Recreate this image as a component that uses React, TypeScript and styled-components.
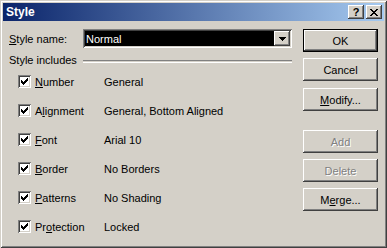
import React from "react";
import styled, { createGlobalStyle } from "styled-components";

const GlobalStyle = createGlobalStyle`
  html, body {
    margin: 0;
    padding: 0;
    background: #d4d0c8;
  }
  body {
    font-family: "Liberation Sans", Arial, sans-serif;
    font-size: 11px;
    color: #000;
  }
`;

const Window = styled.div`
  width: 387px;
  height: 248px;
  box-sizing: border-box;
  padding: 3px;
  background: #d4d0c8;
  box-shadow: inset 1px 1px #d4d0c8, inset -1px -1px #404040,
    inset 2px 2px #fff, inset -2px -2px #808080;
  display: flex;
  flex-direction: column;
`;

const TitleBar = styled.div`
  height: 18px;
  display: flex;
  align-items: center;
  padding: 0 2px 0 3px;
  background: linear-gradient(to right, #0a246a, #a6caf0);
`;

const Title = styled.span`
  flex: 1;
  color: #fff;
  font-weight: bold;
  font-size: 12px;
`;

const CaptionButton = styled.button`
  width: 16px;
  height: 14px;
  margin-left: 2px;
  padding: 0;
  border: none;
  background: #d4d0c8;
  box-shadow: inset -1px -1px #404040, inset 1px 1px #fff,
    inset -2px -2px #808080, inset 2px 2px #d4d0c8;
  display: flex;
  align-items: center;
  justify-content: center;
  font-family: "Liberation Sans", Arial, sans-serif;
  font-weight: bold;
  font-size: 11px;
  line-height: 1;
  color: #000;
`;

const Body = styled.div`
  flex: 1;
  display: flex;
  padding: 8px 6px 0 6px;
`;

const Main = styled.div`
  width: 283px;
  display: flex;
  flex-direction: column;
`;

const NameRow = styled.div`
  display: flex;
  align-items: center;
  height: 19px;
`;

const NameLabel = styled.span`
  width: 74px;
`;

const Combo = styled.div`
  width: 209px;
  height: 19px;
  box-sizing: border-box;
  padding: 2px;
  display: flex;
  background: #fff;
  box-shadow: inset 1px 1px #808080, inset -1px -1px #fff,
    inset 2px 2px #404040, inset -2px -2px #d4d0c8;
`;

const ComboField = styled.div`
  flex: 1;
  background: #000;
  color: #fff;
  display: flex;
  align-items: center;
  padding-left: 1px;
`;

const ComboArrow = styled.div`
  width: 16px;
  background: #d4d0c8;
  box-shadow: inset -1px -1px #404040, inset 1px 1px #fff,
    inset -2px -2px #808080, inset 2px 2px #d4d0c8;
  display: flex;
  align-items: center;
  justify-content: center;
`;

const GroupHeader = styled.div`
  display: flex;
  align-items: center;
  height: 15px;
  margin-top: 4px;
`;

const Rule = styled.div`
  flex: 1;
  margin-left: 6px;
  margin-top: 4px;
  height: 1px;
  border-top: 1px solid #808080;
  border-bottom: 1px solid #fff;
`;

const Row = styled.div`
  display: flex;
  align-items: center;
  height: 29px;
  padding-left: 9px;
`;

const CheckBox = styled.span`
  width: 13px;
  height: 13px;
  box-sizing: border-box;
  background: #fff;
  box-shadow: inset 1px 1px #808080, inset -1px -1px #fff,
    inset 2px 2px #404040, inset -2px -2px #d4d0c8;
  display: flex;
  align-items: center;
  justify-content: center;
  margin-right: 4px;
`;

const RowLabel = styled.span`
  width: 69px;
`;

const Side = styled.div`
  width: 75px;
  margin-left: 11px;
  display: flex;
  flex-direction: column;
`;

const Button = styled.button<{ $gap: number; $default?: boolean }>`
  width: 75px;
  height: 23px;
  margin-top: ${(p) => p.$gap}px;
  padding: 0;
  box-sizing: border-box;
  border: ${(p) => (p.$default ? "1px solid #000" : "none")};
  background: #d4d0c8;
  box-shadow: inset -1px -1px #404040, inset 1px 1px #fff,
    inset -2px -2px #808080, inset 2px 2px #d4d0c8;
  font-family: "Liberation Sans", Arial, sans-serif;
  font-size: 11px;
  color: #000;
  &:disabled {
    color: #808080;
    text-shadow: 1px 1px #fff;
  }
`;

const checkPath =
  "M6 0h1v1h-1z M5 1h2v1h-2z M0 2h1v1h-1z M4 2h3v1h-3z M0 3h2v1h-2z M3 3h3v1h-3z M0 4h5v1h-5z M1 5h3v1h-3z M2 6h1v1h-1z";

const CheckMark = () => (
  <svg width="7" height="7" viewBox="0 0 7 7" shapeRendering="crispEdges">
    <path d={checkPath} fill="#000" />
  </svg>
);

const DownArrow = () => (
  <svg width="7" height="4" viewBox="0 0 7 4" shapeRendering="crispEdges">
    <path d="M0 0h7v1h-7z M1 1h5v1h-5z M2 2h3v1h-3z M3 3h1v1h-1z" fill="#000" />
  </svg>
);

const CloseGlyph = () => (
  <svg width="8" height="7" viewBox="0 0 8 7" shapeRendering="crispEdges">
    <path
      d="M0 0h2v1h-2z M6 0h2v1h-2z M1 1h2v1h-2z M5 1h2v1h-2z M2 2h4v1h-4z M3 3h2v1h-2z M2 4h4v1h-4z M1 5h2v1h-2z M5 5h2v1h-2z M0 6h2v1h-2z M6 6h2v1h-2z"
      fill="#000"
    />
  </svg>
);

const includes = [
  { pre: "", key: "N", post: "umber", value: "General" },
  { pre: "A", key: "l", post: "ignment", value: "General, Bottom Aligned" },
  { pre: "", key: "F", post: "ont", value: "Arial 10" },
  { pre: "", key: "B", post: "order", value: "No Borders" },
  { pre: "", key: "P", post: "atterns", value: "No Shading" },
  { pre: "Pr", key: "o", post: "tection", value: "Locked" },
];

export default function App() {
  return (
    <>
      <GlobalStyle />
      <Window>
        <TitleBar>
          <Title>Style</Title>
          <CaptionButton>?</CaptionButton>
          <CaptionButton>
            <CloseGlyph />
          </CaptionButton>
        </TitleBar>
        <Body>
          <Main>
            <NameRow>
              <NameLabel>
                <u>S</u>tyle name:
              </NameLabel>
              <Combo>
                <ComboField>Normal</ComboField>
                <ComboArrow>
                  <DownArrow />
                </ComboArrow>
              </Combo>
            </NameRow>
            <GroupHeader>
              <span>Style includes</span>
              <Rule />
            </GroupHeader>
            {includes.map((item) => (
              <Row key={item.value}>
                <CheckBox>
                  <CheckMark />
                </CheckBox>
                <RowLabel>
                  {item.pre}
                  <u>{item.key}</u>
                  {item.post}
                </RowLabel>
                <span>{item.value}</span>
              </Row>
            ))}
          </Main>
          <Side>
            <Button $gap={0} $default>
              OK
            </Button>
            <Button $gap={6}>Cancel</Button>
            <Button $gap={7}>
              <u>M</u>odify...
            </Button>
            <Button $gap={19} disabled>
              Add
            </Button>
            <Button $gap={6} disabled>
              Delete
            </Button>
            <Button $gap={6}>
              M<u>e</u>rge...
            </Button>
          </Side>
        </Body>
      </Window>
    </>
  );
}
